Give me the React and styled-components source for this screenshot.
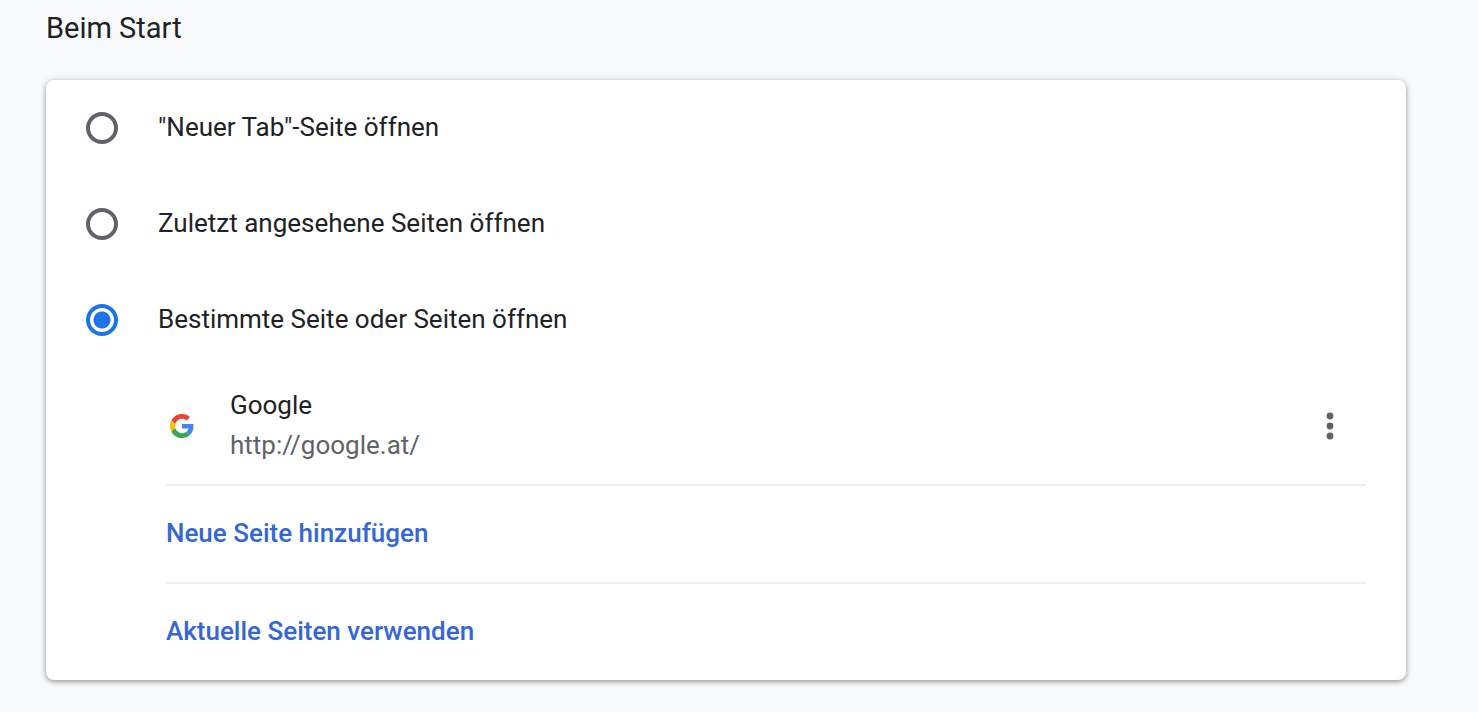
import React, {useState} from 'react';
import styled, {createGlobalStyle} from 'styled-components';

const GlobalStyle = createGlobalStyle`
  * {
    box-sizing: border-box;
  }

  body {
    margin: 0;
    background: #f8f9fb;
    color: #202124;
    font-family: Roboto, 'Liberation Sans', sans-serif;
    font-size: 26px;
    line-height: 40px;
  }
`;

const Page = styled.main`
  padding: 8px 72px 32px 46px;
`;

const Title = styled.h2`
  margin: 0 0 32px;
  font-size: 29px;
  font-weight: 400;
  line-height: 40px;
`;

const Card = styled.section`
  padding: 0 40px;
  border-radius: 8px;
  background: #fff;
  box-shadow: 0 2px 4px rgba(60, 64, 67, 0.3), 0 1px 6px rgba(60, 64, 67, 0.3);
`;

const Options = styled.fieldset`
  margin: 0;
  padding: 0;
  border: 0;
`;

const Option = styled.label`
  display: flex;
  align-items: center;
  gap: 40px;
  height: 96px;
  cursor: pointer;
`;

const Radio = styled.input`
  appearance: none;
  flex: none;
  width: 32px;
  height: 32px;
  margin: 0;
  border: 4px solid #5f6368;
  border-radius: 50%;
  cursor: pointer;

  &:checked {
    border-color: #1a73e8;
    background: radial-gradient(circle, #1a73e8 8px, transparent 9px);
  }
`;

const OptionText = styled.span`
  padding-bottom: 2px;
`;

const PageList = styled.div`
  margin-left: 80px;
`;

const SiteRow = styled.div`
  display: flex;
  align-items: center;
  gap: 32px;
  height: 116px;
`;

const Favicon = styled.svg`
  flex: none;
  width: 32px;
  height: 32px;
  padding: 4px;
`;

const SiteInfo = styled.div`
  flex: 1;
  min-width: 0;
  padding-bottom: 2px;
`;

const SiteUrl = styled.div`
  color: #5f6368;
`;

const MenuButton = styled.button`
  display: flex;
  align-items: center;
  justify-content: center;
  width: 72px;
  height: 72px;
  padding: 0;
  border: 0;
  border-radius: 50%;
  background: none;
  cursor: pointer;
`;

const ActionRow = styled.div`
  display: flex;
  align-items: center;
  height: 98px;
  border-top: 2px solid #eee;
`;

const ActionButton = styled.button`
  padding: 0 0 2px;
  border: 0;
  background: none;
  color: #3367d6;
  font: inherit;
  font-weight: 500;
  cursor: pointer;
`;

const options = [
  {value: 'newtab', label: '"Neuer Tab"-Seite öffnen'},
  {value: 'continue', label: 'Zuletzt angesehene Seiten öffnen'},
  {value: 'specific', label: 'Bestimmte Seite oder Seiten öffnen'},
];

function GoogleIcon() {
  return (
    <Favicon viewBox="0 0 48 48" aria-hidden="true">
      <path fill="#EA4335" d="M24 9.5c3.54 0 6.71 1.22 9.21 3.6l6.85-6.85C35.9 2.38 30.47 0 24 0 14.62 0 6.51 5.38 2.56 13.22l7.98 6.19C12.43 13.72 17.74 9.5 24 9.5z" />
      <path fill="#4285F4" d="M46.98 24.55c0-1.57-.15-3.09-.38-4.55H24v9.02h12.94c-.58 2.96-2.26 5.48-4.78 7.18l7.73 6c4.51-4.18 7.09-10.36 7.09-17.65z" />
      <path fill="#FBBC05" d="M10.53 28.59c-.48-1.45-.76-2.99-.76-4.59s.27-3.14.76-4.59l-7.98-6.19C.92 16.46 0 20.12 0 24c0 3.88.92 7.54 2.56 10.78l7.97-6.19z" />
      <path fill="#34A853" d="M24 48c6.48 0 11.93-2.13 15.89-5.81l-7.73-6c-2.15 1.45-4.92 2.3-8.16 2.3-6.26 0-11.57-4.22-13.47-9.91l-7.98 6.19C6.51 42.62 14.62 48 24 48z" />
    </Favicon>
  )
}

function App() {
  const [selected, setSelected] = useState('specific')

  return (
    <Page>
      <GlobalStyle />
      <Title id="startup-title">Beim Start</Title>
      <Card>
        <Options aria-labelledby="startup-title">
          {options.map(({value, label}) => (
            <Option key={value}>
              <Radio
                type="radio"
                name="startup"
                value={value}
                checked={selected === value}
                onChange={() => setSelected(value)}
              />
              <OptionText>{label}</OptionText>
            </Option>
          ))}
        </Options>
        {selected === 'specific' && (
          <PageList>
            <SiteRow>
              <GoogleIcon />
              <SiteInfo>
                <div>Google</div>
                <SiteUrl>http://google.at/</SiteUrl>
              </SiteInfo>
              <MenuButton type="button" aria-label="Weitere Aktionen">
                <svg width="8" height="28" viewBox="0 0 8 28" fill="#5f6368" aria-hidden="true">
                  <circle cx="4" cy="4" r="3.4" />
                  <circle cx="4" cy="14" r="3.4" />
                  <circle cx="4" cy="24" r="3.4" />
                </svg>
              </MenuButton>
            </SiteRow>
            <ActionRow>
              <ActionButton type="button">Neue Seite hinzufügen</ActionButton>
            </ActionRow>
            <ActionRow>
              <ActionButton type="button">Aktuelle Seiten verwenden</ActionButton>
            </ActionRow>
          </PageList>
        )}
      </Card>
    </Page>
  )
}

export default App;
